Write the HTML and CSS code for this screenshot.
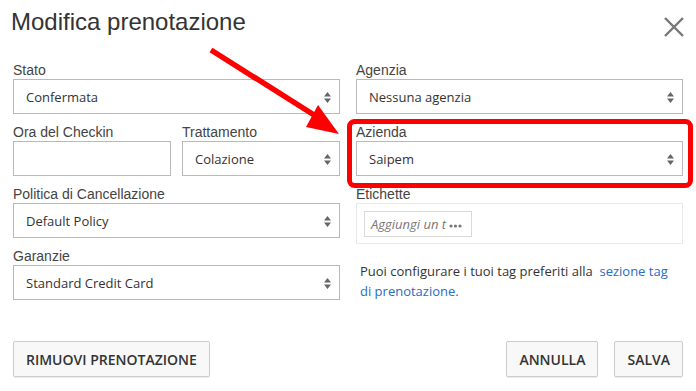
FILE: index.html
```html
<!DOCTYPE html>
<html lang="it">
<head>
	<meta charset="UTF-8">
	<title>Modifica prenotazione</title>
	<link rel="stylesheet" href="styles.css">
</head>
<body>
	<div id="modal">
		<div class="head">
			<h1>Modifica prenotazione</h1>
			<span class="close">
				<svg width="20" height="20" viewBox="0 0 20 20"><path d="M1 1L19 19M19 1L1 19" stroke="#777" stroke-width="2.4" fill="none"/></svg>
			</span>
		</div>

		<div class="form">
			<div class="col">
				<div class="group">
					<label>Stato</label>
					<div class="sel">Confermata<svg class="caret" width="7" height="11" viewBox="0 0 7 11"><path d="M3.5 0L7 4.5H0zM0 6.5h7L3.5 11z"/></svg></div>
				</div>
				<div class="group pair">
					<div>
						<label>Ora del Checkin</label>
						<div class="inp"></div>
					</div>
					<div>
						<label>Trattamento</label>
						<div class="sel">Colazione<svg class="caret" width="7" height="11" viewBox="0 0 7 11"><path d="M3.5 0L7 4.5H0zM0 6.5h7L3.5 11z"/></svg></div>
					</div>
				</div>
				<div class="group">
					<label>Politica di Cancellazione</label>
					<div class="sel">Default Policy<svg class="caret" width="7" height="11" viewBox="0 0 7 11"><path d="M3.5 0L7 4.5H0zM0 6.5h7L3.5 11z"/></svg></div>
				</div>
				<div class="group">
					<label>Garanzie</label>
					<div class="sel">Standard Credit Card<svg class="caret" width="7" height="11" viewBox="0 0 7 11"><path d="M3.5 0L7 4.5H0zM0 6.5h7L3.5 11z"/></svg></div>
				</div>
			</div>

			<div class="col">
				<div class="group">
					<label>Agenzia</label>
					<div class="sel">Nessuna agenzia<svg class="caret" width="7" height="11" viewBox="0 0 7 11"><path d="M3.5 0L7 4.5H0zM0 6.5h7L3.5 11z"/></svg></div>
				</div>
				<div class="group">
					<label>Azienda</label>
					<div class="sel">Saipem<svg class="caret" width="7" height="11" viewBox="0 0 7 11"><path d="M3.5 0L7 4.5H0zM0 6.5h7L3.5 11z"/></svg></div>
				</div>
				<div class="group">
					<label>Etichette</label>
					<div class="tags">
						<div class="tag-inp">Aggiungi un t<svg class="dots" width="13" height="4" viewBox="0 0 13 4"><circle cx="2" cy="2" r="1.6"/><circle cx="6.5" cy="2" r="1.6"/><circle cx="11" cy="2" r="1.6"/></svg></div>
					</div>
				</div>
				<p class="help">Puoi configurare i tuoi tag preferiti alla&nbsp; <a href="#">sezione tag</a><br><a href="#">di prenotazione.</a></p>
			</div>
		</div>

		<div class="foot">
			<button class="btn">RIMUOVI PRENOTAZIONE</button>
			<div class="right">
				<button class="btn">ANNULLA</button>
				<button class="btn">SALVA</button>
			</div>
		</div>

		<!-- annotazione -->
		<svg class="mark" width="696" height="391" viewBox="0 0 696 391">
			<line x1="211" y1="50" x2="322" y2="120" stroke="#f00" stroke-width="5.5"/>
			<polygon points="318,105 339,134 306,127" fill="#f00"/>
			<rect x="349.5" y="121.5" width="341" height="64" rx="5" fill="none" stroke="#f00" stroke-width="5"/>
		</svg>
	</div>
</body>
</html>
```

FILE: styles.css
```css
*{
	margin:0;
	padding:0;
	box-sizing:border-box;
}
body{
	background:#fff;
	font-family:"Open Sans", "Liberation Sans", sans-serif;
	color:#333;
}
#modal{
	width:696px;
	height:391px;
	position:relative;
	padding:8px 13px 0 13px;
}
.head{
	display:flex;
	justify-content:space-between;
	align-items:flex-start;
	height:54px;
}
.head h1{
	font-family:"Liberation Sans", Arial, sans-serif;
	font-weight:normal;
	font-size:24px;
	line-height:28px;
	color:#333;
	margin-left:-2px;
}
.close{
	margin-top:9px;
	margin-right:-1px;
	display:block;
}
.form{
	display:grid;
	grid-template-columns:327px 327px;
	column-gap:16px;
}
.group{
	margin-bottom:10px;
}
.pair{
	display:grid;
	grid-template-columns:158px 158px;
	column-gap:11px;
}
label{
	display:block;
	font-family:"Liberation Sans", Arial, sans-serif;
	font-size:14px;
	line-height:16px;
	color:#444;
	margin-bottom:1px;
}
.sel,.inp{
	height:35px;
	border:1px solid #b9b9b9;
	font-size:13px;
	line-height:33px;
	padding:1px 0 0 12px;
	position:relative;
	color:#333;
}
.caret{
	position:absolute;
	right:8px;
	top:12px;
	fill:#666;
}
.tags{
	height:41px;
	border:1px solid #e9e9e9;
	padding:7px;
}
.tag-inp{
	width:108px;
	height:26px;
	border:1px solid #d9d9d9;
	font-size:13px;
	line-height:24px;
	font-style:italic;
	color:#777;
	padding-left:6px;
	white-space:nowrap;
	overflow:hidden;
}
.dots{
	fill:#777;
	margin-left:3px;
	vertical-align:1px;
}
.help{
	font-size:13px;
	line-height:20px;
	padding:7px 10px 0 4px;
	color:#333;
}
.help a{
	color:#2a6cc0;
	text-decoration:none;
}
.foot{
	display:flex;
	justify-content:space-between;
	margin-top:31px;
}
.right{
	display:flex;
	gap:16px;
}
.btn{
	height:36px;
	font-family:"Open Sans", sans-serif;
	font-weight:600;
	font-size:14px;
	color:#333;
	background:#f8f8f8;
	border:1px solid #ccc;
	border-radius:2px;
	box-shadow:0 1px 1px rgba(0,0,0,0.08);
	padding:0 12px;
}
.mark{
	position:absolute;
	left:0;
	top:0;
	pointer-events:none;
}
```
